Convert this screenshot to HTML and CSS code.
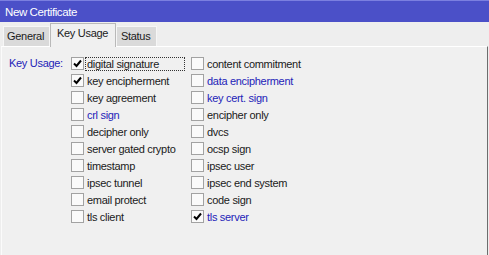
FILE: index.html
```html
<!DOCTYPE html>
<html lang="en">
<head>
    <meta charset="UTF-8">
    <title>New Certificate</title>
    <link rel="stylesheet" href="styles.css">
</head>
<body>
    <div class="window">
        <div class="titlebar">New Certificate</div>
        <div class="tabs">
            <div class="tab tab-general">General</div>
            <div class="tab tab-active">Key Usage</div>
            <div class="tab tab-status">Status</div>
        </div>
        <div class="panel">
            <div class="field">
                <div class="field-label">Key Usage:</div>
                <div class="options">
                    <div class="opt"><span class="box checked"><svg width="9" height="9" viewBox="0 0 9 9"><path d="M1 4.5 L3.5 7 L8 1.5" fill="none" stroke="#000" stroke-width="2"/></svg></span><span class="text focus">digital signature</span></div>
                    <div class="opt"><span class="box"></span><span class="text">content commitment</span></div>
                    <div class="opt"><span class="box checked"><svg width="9" height="9" viewBox="0 0 9 9"><path d="M1 4.5 L3.5 7 L8 1.5" fill="none" stroke="#000" stroke-width="2"/></svg></span><span class="text">key encipherment</span></div>
                    <div class="opt"><span class="box"></span><span class="text blue">data encipherment</span></div>
                    <div class="opt"><span class="box"></span><span class="text">key agreement</span></div>
                    <div class="opt"><span class="box"></span><span class="text blue">key cert. sign</span></div>
                    <div class="opt"><span class="box"></span><span class="text blue">crl sign</span></div>
                    <div class="opt"><span class="box"></span><span class="text">encipher only</span></div>
                    <div class="opt"><span class="box"></span><span class="text">decipher only</span></div>
                    <div class="opt"><span class="box"></span><span class="text">dvcs</span></div>
                    <div class="opt"><span class="box"></span><span class="text">server gated crypto</span></div>
                    <div class="opt"><span class="box"></span><span class="text">ocsp sign</span></div>
                    <div class="opt"><span class="box"></span><span class="text">timestamp</span></div>
                    <div class="opt"><span class="box"></span><span class="text">ipsec user</span></div>
                    <div class="opt"><span class="box"></span><span class="text">ipsec tunnel</span></div>
                    <div class="opt"><span class="box"></span><span class="text">ipsec end system</span></div>
                    <div class="opt"><span class="box"></span><span class="text">email protect</span></div>
                    <div class="opt"><span class="box"></span><span class="text">code sign</span></div>
                    <div class="opt"><span class="box"></span><span class="text">tls client</span></div>
                    <div class="opt"><span class="box checked"><svg width="9" height="9" viewBox="0 0 9 9"><path d="M1 4.5 L3.5 7 L8 1.5" fill="none" stroke="#000" stroke-width="2"/></svg></span><span class="text blue">tls server</span></div>
                </div>
            </div>
        </div>
    </div>
</body>
</html>
```

FILE: styles.css
```css
html, body {
    margin: 0;
    height: 100%;
}
body {
    font-family: 'Liberation Sans', Arial, sans-serif;
    font-size: 11px;
    letter-spacing: -0.3px;
    color: #1a1a1a;
    background: #eeeeee;
}
.window {
    display: flex;
    flex-direction: column;
    height: 255px;
}
.titlebar {
    height: 21px;
    line-height: 22px;
    border-top: 1px solid #7b7fe0;
    background: #4b50c8;
    color: #ffffff;
    padding-left: 5px;
    font-size: 11.5px;
    letter-spacing: -0.4px;
}
.tabs {
    display: flex;
    align-items: flex-end;
    height: 24px;
    padding-left: 3px;
    background: #eeeeee;
}
.tab {
    box-sizing: border-box;
    height: 20px;
    line-height: 19px;
    background: #dadada;
    border: 1px solid #f6f6f6;
    border-bottom: none;
}
.tab-general {
    width: 47px;
    padding-left: 3px;
}
.tab-active {
    width: 66px;
    height: 24px;
    line-height: 19px;
    padding-left: 6px;
    background: #f0f0f0;
    border: 1px solid #b9b9b9;
    border-bottom: none;
    margin-bottom: -1px;
    position: relative;
}
.tab-status {
    width: 41px;
    padding-left: 4px;
}
.panel {
    flex: 1;
    margin: 0 1px 0 1px;
    background: #f0f0f0;
    border-top: 1px solid #ffffff;
    border-left: 1px solid #fbfbfb;
    border-right: 1px solid #6d6d6d;
    padding-top: 8px;
}
.field {
    display: flex;
}
.field-label {
    width: 62px;
    padding-left: 7px;
    height: 17px;
    line-height: 17px;
    color: #2323b8;
}
.options {
    display: grid;
    grid-template-columns: 120px 160px;
    grid-auto-rows: 17px;
}
.opt {
    display: flex;
    align-items: center;
}
.box {
    box-sizing: border-box;
    width: 13px;
    height: 13px;
    border: 1px solid #a2a2a2;
    background: #fafafa;
    display: flex;
    align-items: center;
    justify-content: center;
    margin-right: 1px;
}
.box svg {
    display: block;
}
.text {
    border: 1px solid transparent;
    padding: 0 1px;
    line-height: 12px;
}
.focus {
    border: 1px dotted #333333;
    width: 96px;
}
.blue {
    color: #2323b8;
}
```
